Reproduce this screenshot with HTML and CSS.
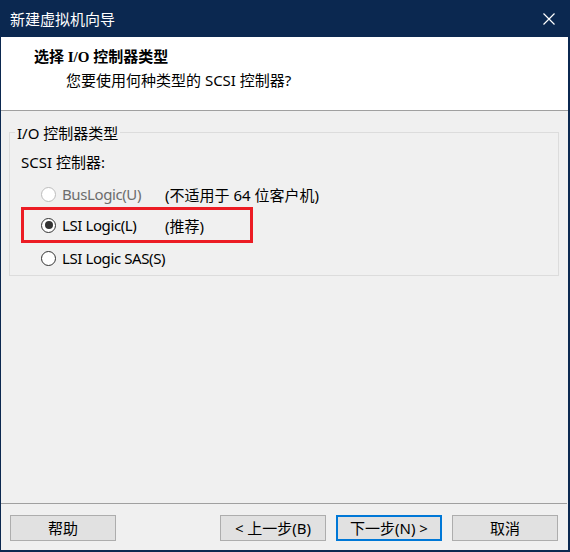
FILE: index.html
```html
<!DOCTYPE html>
<html lang="zh-CN">
<head>
<meta charset="utf-8">
<title>新建虚拟机向导</title>
<link rel="stylesheet" href="styles.css">
</head>
<body>
<div class="window">
  <div class="titlebar">
    <span class="title">新建虚拟机向导</span>
    <svg class="close" width="12" height="12" viewBox="0 0 12 12"><path d="M0.5 0.5 L11.5 11.5 M11.5 0.5 L0.5 11.5" stroke="#fff" stroke-width="1.2" fill="none"/></svg>
  </div>
  <div class="header">
    <div class="h-title">选择 I/O 控制器类型</div>
    <div class="h-sub">您要使用何种类型的 SCSI 控制器?</div>
  </div>
  <div class="body">
    <fieldset class="group">
      <legend class="legend">I/O 控制器类型</legend>
      <div class="scsi-label">SCSI 控制器:</div>
      <div class="row row-bus disabled">
        <span class="radio"></span>
        <span class="opt">BusLogic(U)</span>
        <span class="note">(不适用于 64 位客户机)</span>
      </div>
      <div class="highlight">
        <div class="row row-lsi">
          <span class="radio checked"></span>
          <span class="opt">LSI Logic(L)</span>
          <span class="note">(推荐)</span>
        </div>
      </div>
      <div class="row row-sas">
        <span class="radio"></span>
        <span class="opt">LSI Logic SAS(S)</span>
      </div>
    </fieldset>
    <div class="footer">
      <button class="btn">帮助</button>
      <div class="spacer"></div>
      <button class="btn">&lt; 上一步(B)</button>
      <button class="btn default">下一步(N) &gt;</button>
      <button class="btn">取消</button>
    </div>
  </div>
</div>
</body>
</html>
```
FILE: styles.css
```css
* { box-sizing: border-box; }
html, body { margin: 0; padding: 0; }
body {
  width: 570px;
  height: 552px;
  font-family: "Noto Sans", "Noto Sans CJK SC", sans-serif;
  font-size: 15px;
  color: #000;
  overflow: hidden;
}
.window {
  width: 570px;
  height: 552px;
  border-left: 1px solid #0b2850;
  border-right: 2px solid #0b2850;
  border-bottom: 2px solid #0b2850;
  background: #f0f0f0;
  display: flex;
  flex-direction: column;
}
.titlebar {
  height: 37px;
  background: #0b2850;
  color: #fff;
  display: flex;
  align-items: center;
  justify-content: space-between;
  padding: 1px 13px 0 9px;
  flex-shrink: 0;
}
.title { font-size: 15px; line-height: 20px; }
.close { display: block; }
.header {
  height: 74px;
  background: #fff;
  border-bottom: 1px solid #a0a0a0;
  padding: 10px 0 0 33px;
  flex-shrink: 0;
}
.h-title {
  font-family: "Liberation Serif", "Noto Sans CJK SC", serif;
  font-weight: bold;
  font-size: 15px;
  line-height: 20px;
}
.h-sub {
  margin-top: 3px;
  padding-left: 32px;
  line-height: 20px;
}
.body {
  flex: 1;
  display: flex;
  flex-direction: column;
}
.group {
  margin: 10px 0 0 8px;
  width: 550px;
  border: 1px solid #dcdcdc;
  padding: 0 0 5px 11px;
  min-width: 0;
}
.legend {
  padding: 2px 2px 0 2px;
  margin-left: -6px;
  line-height: 20px;
}
.scsi-label {
  margin-top: 9px;
  line-height: 20px;
}
.row {
  height: 24px;
  display: flex;
  align-items: center;
}
.row-bus { margin-top: 10px; padding-left: 20px; }
.row-sas { margin-top: 3px; padding-left: 20px; }
.highlight {
  margin-top: 1px;
  width: 232px;
  height: 36px;
  border: 3px solid #ec1c24;
  display: flex;
  align-items: center;
  padding-left: 17px;
}
.row-lsi { height: 30px; }
.radio {
  width: 15px;
  height: 15px;
  border: 1px solid #333;
  border-radius: 50%;
  background: #fff;
  display: flex;
  align-items: center;
  justify-content: center;
  flex-shrink: 0;
}
.radio.checked::after {
  content: "";
  width: 8px;
  height: 8px;
  border-radius: 50%;
  background: #333;
}
.disabled .radio { border-color: #bcbcbc; }
.disabled .opt { color: #6d6d6d; }
.opt {
  margin-left: 6px;
  width: 103px;
  white-space: nowrap;
  letter-spacing: -0.4px;
}
.note { white-space: nowrap; }
.footer {
  margin-top: auto;
  height: 47px;
  border-top: 1px solid #a0a0a0;
  margin-right: 1px;
  padding: 11px 9px 9px 9px;
  display: flex;
  gap: 10px;
}
.spacer { flex: 1; }
.btn {
  width: 106px;
  height: 26px;
  border: 1px solid #adadad;
  background: #e1e1e1;
  font-family: "Noto Sans", "Noto Sans CJK SC", sans-serif;
  font-size: 15px;
  color: #000;
  padding: 0;
  line-height: 22px;
}
.btn.default { border: 2px solid #0078d7; }
```
